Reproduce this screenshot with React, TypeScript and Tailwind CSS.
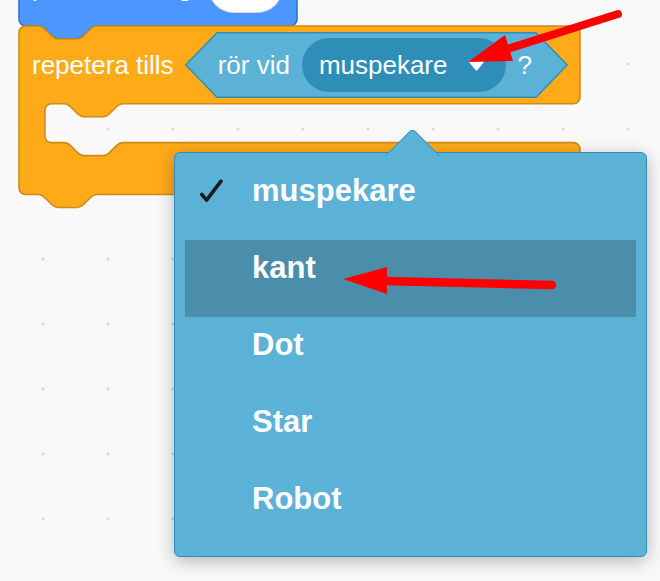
import React from "react"

const menuItems = [
  { label: "muspekare", checked: true },
  { label: "kant", hover: true },
  { label: "Dot" },
  { label: "Star" },
  { label: "Robot" },
]

// scratch block units -> px
const S = 1.62

const notchFwd = "c 2,0 3,1 4,2 l 4,4 c 1,1 2,2 4,2 h 12 c 2,0 3,-1 4,-2 l 4,-4 c 1,-1 2,-2 4,-2"
const notchBack = "c -2,0 -3,1 -4,2 l -4,4 c -1,1 -2,2 -4,2 h -12 c -2,0 -3,-1 -4,-2 l -4,-4 c -1,-1 -2,-2 -4,-2"

function cBlockPath(w: number) {
  return [
    "M 0,4 A 4,4 0 0,1 4,0 H 12",
    notchFwd,
    `H ${w - 4} a 4,4 0 0,1 4,4 V 44 a 4,4 0 0,1 -4,4 H 64`,
    notchBack,
    "H 20 a 4,4 0 0,0 -4,4 V 68 a 4,4 0 0,0 4,4 H 28",
    notchFwd,
    `H ${w - 4} a 4,4 0 0,1 4,4 V 100 a 4,4 0 0,1 -4,4 H 48`,
    notchBack,
    "H 4 a 4,4 0 0,1 -4,-4 z",
  ].join(" ")
}

function stackBlockPath(w: number) {
  return [
    `M 0,4 A 4,4 0 0,1 4,0 H ${w - 4} a 4,4 0 0,1 4,4 V 44 a 4,4 0 0,1 -4,4 H 48`,
    notchBack,
    "H 4 a 4,4 0 0,1 -4,-4 z",
  ].join(" ")
}

function CheckIcon() {
  return (
    <svg width="24" height="24" viewBox="0 0 24 24" className="mt-[4px]">
      <polyline
        points="1.8,15.5 6.6,21.2 21,2.2"
        fill="none"
        stroke="#1c1c1c"
        strokeWidth="3.6"
        strokeLinecap="round"
        strokeLinejoin="round"
      />
    </svg>
  )
}

export default function App() {
  return (
    <div className="relative h-[581px] w-[660px] overflow-hidden bg-[#f9f9f9] bg-[radial-gradient(circle_at_center,#d2d2d2_1px,transparent_1.6px)] bg-[length:65px_65px] bg-[position:10.5px_31.5px] font-['Liberation_Sans',Arial,sans-serif] text-white">
      {/* blue motion block above, mostly scrolled off */}
      <div className="absolute left-[19px] top-[-52px] h-[78px] w-[278px]">
        <svg className="absolute left-0 top-0 overflow-visible" width="278" height="92">
          <g transform={`scale(${S})`}>
            <path d={stackBlockPath(278 / S)} fill="#4c97ff" stroke="#3373cc" strokeWidth="1" />
          </g>
        </svg>
        <div className="relative flex h-[78px] items-center gap-[16px] pl-[13px]">
          <span className="text-[26px] leading-none">peka i riktning</span>
          <div className="flex h-[52px] w-[75px] items-center justify-center rounded-full border border-black/15 bg-white text-[26px] leading-none text-[#575e75]">
            90
          </div>
        </div>
      </div>

      {/* orange repeat until block */}
      <div className="absolute left-[19px] top-[26px] h-[168px] w-[561px]">
        <svg className="absolute left-0 top-0 overflow-visible" width="561" height="182">
          <g transform={`scale(${S})`}>
            <path d={cBlockPath(561 / S)} fill="#ffab19" stroke="#cf8b17" strokeWidth="1" />
          </g>
        </svg>
        <div className="relative flex h-[78px] items-center gap-[11px] pl-[13px]">
          <span className="text-[26px] leading-none">repetera tills</span>

          {/* boolean sensing block */}
          <div className="relative h-[66px] w-[383px]">
            <svg className="absolute inset-0" width="383" height="66" viewBox="0 0 383 66">
              <polygon
                points="32,0.75 351,0.75 382.25,33 351,65.25 32,65.25 0.75,33"
                fill="#5cb1d6"
                stroke="#2e8eb8"
                strokeWidth="1.5"
              />
            </svg>
            <div className="relative flex h-full items-center gap-[12px] pl-[33px]">
              <span className="text-[26px] leading-none">rör vid</span>
              <div className="flex h-[54px] items-center gap-[20px] rounded-full bg-[#2e8eb8] pl-[17px] pr-[21px]">
                <span className="text-[26px] leading-none">muspekare</span>
                <svg width="17" height="11" viewBox="0 0 17 11">
                  <path d="M2,1.5 H15 L8.5,9.5 Z" fill="#fff" stroke="#fff" strokeWidth="2" strokeLinejoin="round" />
                </svg>
              </div>
              <span className="text-[26px] leading-none">?</span>
            </div>
          </div>
        </div>
      </div>

      {/* dropdown menu */}
      <div className="absolute left-[174px] top-[152px] h-[405px] w-[473px] rounded-[6px] border border-[#2e8eb8] bg-[#5cb1d6] p-[10px] shadow-[0_4px_18px_rgba(0,0,0,0.28)]">
        <div className="absolute left-[218px] top-[-17px] h-[39px] w-[39px] rotate-45 rounded-tl-[5px] border-l border-t border-[#2e8eb8] bg-[#5cb1d6]" />
        <div className="relative flex flex-col">
          {menuItems.map((item) => (
            <div
              key={item.label}
              className={`flex h-[77px] items-start pt-[12px] ${item.hover ? "bg-[#4a8eab]" : ""}`}
            >
              <div className="w-[67px] pl-[15px]">{item.checked && <CheckIcon />}</div>
              <span className="text-[31px] font-bold leading-[31px]">{item.label}</span>
            </div>
          ))}
        </div>
      </div>

      {/* red annotation arrows */}
      <svg className="pointer-events-none absolute inset-0" width="660" height="581" viewBox="0 0 660 581">
        <line x1="618" y1="14" x2="504" y2="50" stroke="#ff0000" strokeWidth="8" strokeLinecap="round" />
        <polygon points="468,62 505,35 513,61" fill="#ff0000" />
        <line x1="552" y1="285" x2="384" y2="281" stroke="#ff0000" strokeWidth="8.5" strokeLinecap="round" />
        <polygon points="343,279 387,267 387,294" fill="#ff0000" />
      </svg>
    </div>
  )
}
